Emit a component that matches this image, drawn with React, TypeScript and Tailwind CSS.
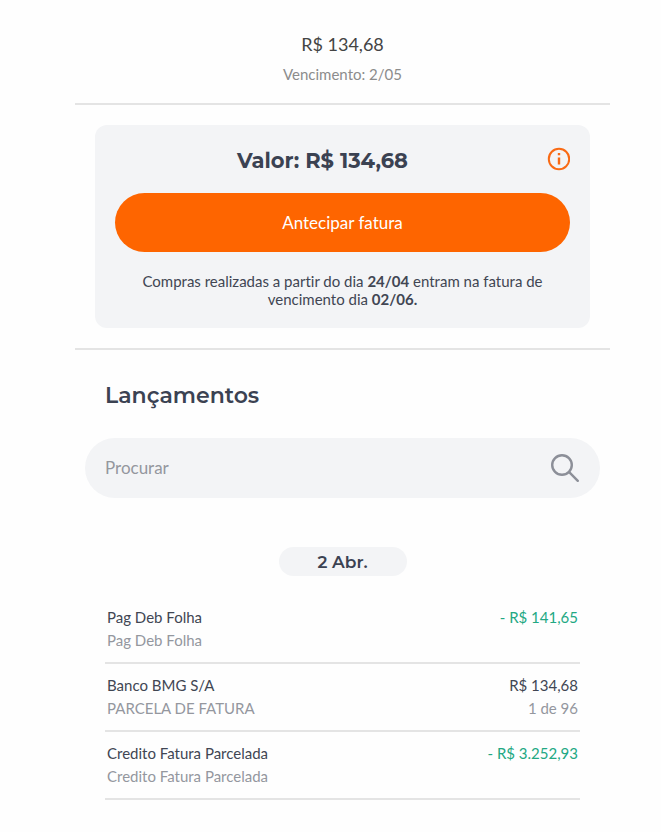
import { useState } from 'react'

const entries = [
  { title: 'Pag Deb Folha', detail: 'Pag Deb Folha', amount: '- R$ 141,65', note: '', credit: true },
  { title: 'Banco BMG S/A', detail: 'PARCELA DE FATURA', amount: 'R$ 134,68', note: '1 de 96', credit: false },
  { title: 'Credito Fatura Parcelada', detail: 'Credito Fatura Parcelada', amount: '- R$ 3.252,93', note: '', credit: true },
]

export default function App() {
  const [query, setQuery] = useState('')

  return (
    <div className="min-h-screen bg-[#fefefe] pt-[30px] pr-[51px] pb-8 pl-[75px] font-['Lato',sans-serif] text-[#414653] [font-variant-ligatures:none]">
      <header className="border-b-2 border-[#e4e4e4] pb-[17px] text-center">
        <p className="text-lg leading-7 text-[#444444]">R$ 134,68</p>
        <p className="mt-1 text-[15px] leading-6 text-[#8c8c8c]">Vencimento: 2/05</p>
      </header>

      <section className="border-b-2 border-[#e4e4e4] px-5 py-5">
        <div className="rounded-xl bg-[#f3f4f6] p-5">
          <div className="flex items-start gap-4">
            <h1 className="flex-1 text-center font-['Montserrat',sans-serif] text-[21px] leading-8 font-bold text-[#3b4252]">
              Valor: R$ 134,68
            </h1>
            <button type="button" aria-label="Informações" className="mt-[2px] text-[#f96a14]">
              <svg width="24" height="24" viewBox="0 0 24 24" fill="none" stroke="currentColor">
                <circle cx="13" cy="12" r="10.2" strokeWidth="2" />
                <path d="M13 10.4v7M13 6v2.2" strokeWidth="2.4" />
              </svg>
            </button>
          </div>
          <button type="button" className="mt-4 h-[59px] w-full rounded-full bg-[#fe6500] text-[17px] text-white">
            Antecipar fatura
          </button>
          <p className="mt-5 px-6 text-center text-[15px] leading-[18px]">
            Compras realizadas a partir do dia <strong>24/04</strong> entram na fatura de vencimento dia <strong>02/06.</strong>
          </p>
        </div>
      </section>

      <section className="px-[10px] pt-7">
        <h2 className="px-5 font-['Montserrat',sans-serif] text-[22px] leading-9 font-semibold text-[#3b4252]">Lançamentos</h2>
        <label className="mt-6 flex h-[60px] items-center rounded-full bg-[#f3f4f6] px-5">
          <input
            type="search"
            aria-label="Procurar"
            placeholder="Procurar"
            value={query}
            onChange={(e) => setQuery(e.target.value)}
            className="min-w-0 flex-1 bg-transparent text-[17px] outline-none placeholder:text-[#94979e]"
          />
          <svg width="30" height="30" viewBox="0 0 30 30" fill="none" stroke="#8c8f98" strokeWidth="2.4" strokeLinecap="round">
            <circle cx="12" cy="12" r="9.8" />
            <path d="M19.2 19.2l8.6 8.6" />
          </svg>
        </label>

        <div className="mt-[49px] flex justify-center">
          <h3 className="w-32 rounded-full bg-[#f3f4f6] pt-px text-center font-['Montserrat',sans-serif] text-[17px] leading-7 font-semibold text-[#3b4252]">
            2 Abr.
          </h3>
        </div>

        <ul className="mt-5 px-5">
          {entries.map((entry) => (
            <li key={entry.title} className="flex justify-between border-b-2 border-[#e4e4e4] px-[2px] py-[10px] text-[15px] leading-[23px]">
              <div>
                <p>{entry.title}</p>
                <p className="text-[#94979e]">{entry.detail}</p>
              </div>
              <div className="text-right">
                <p className={entry.credit ? 'text-[#22a883]' : ''}>{entry.amount}</p>
                <p className="text-[#94979e]">{entry.note}</p>
              </div>
            </li>
          ))}
        </ul>
      </section>
    </div>
  )
}
